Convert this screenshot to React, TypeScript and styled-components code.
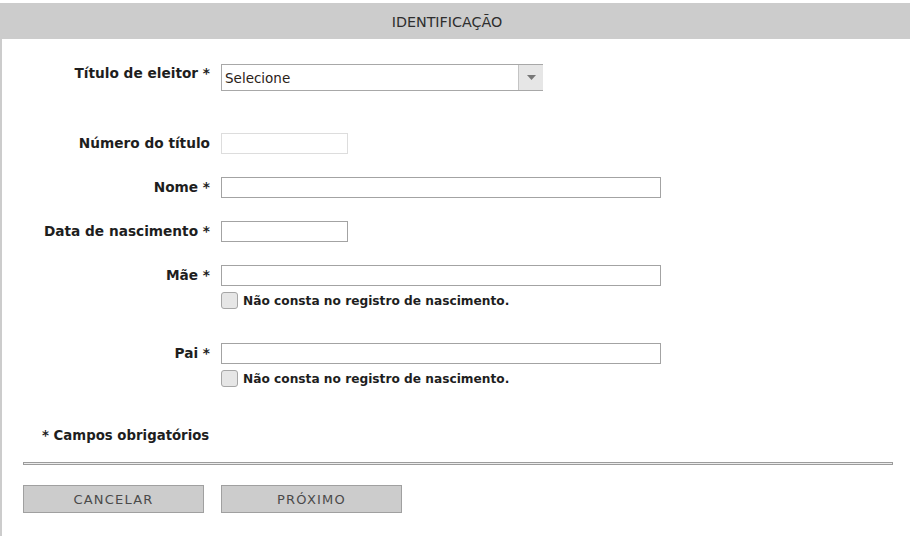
import React from "react";
import styled, { createGlobalStyle } from "styled-components";

const Global = createGlobalStyle`
  html, body { margin: 0; padding: 0; background: #fff; }
  body { font-family: Tahoma, "DejaVu Sans", Verdana, sans-serif; color: #1e1e1e; }
  * { box-sizing: border-box; }
`;

const Page = styled.div`
  margin-top: 3px;
  min-height: 533px;
  border-left: 2px solid #cccccc;
  width: 910px;
`;

const Header = styled.div`
  height: 36px;
  background: #cccccc;
  display: flex;
  align-items: center;
  justify-content: center;
  font-size: 14.3px;
  color: #2e2e2e;
  padding-top: 2px;
  padding-right: 18px;
`;

const Form = styled.div`
  display: flex;
  flex-direction: column;
`;

const Row = styled.div<{ $mt: number }>`
  display: grid;
  grid-template-columns: 208px 1fr;
  column-gap: 11px;
  align-items: start;
  margin-top: ${(p) => p.$mt}px;
`;

const Label = styled.label<{ $lh?: number }>`
  text-align: right;
  font-weight: bold;
  font-size: 13.7px;
  line-height: ${(p) => p.$lh ?? 20}px;
  color: #1e1e1e;
  white-space: nowrap;
`;

const Field = styled.div`
  display: flex;
  flex-direction: column;
  align-items: flex-start;
`;

const TextInput = styled.input<{ $w: number; $disabled?: boolean }>`
  width: ${(p) => p.$w}px;
  height: 21px;
  margin: 0;
  padding: 0 4px;
  border: 1px solid ${(p) => (p.$disabled ? "#dddddd" : "#a3a3a3")};
  background: #fff;
  font-family: inherit;
  font-size: 13px;
  outline: none;
`;

const Select = styled.div`
  width: 322px;
  height: 27px;
  display: flex;
  border: 1px solid #a8a8a8;
  border-right: none;
  background: #fff;
`;

const SelectText = styled.div`
  flex: 1;
  display: flex;
  align-items: center;
  padding-left: 3px;
  font-size: 13.5px;
  color: #2a2218;
`;

const SelectArrow = styled.div`
  width: 25px;
  border-left: 1px solid #c4c4c4;
  background: #e6e6e6;
  display: flex;
  align-items: center;
  justify-content: center;
`;

const CheckRow = styled.label`
  display: flex;
  align-items: center;
  gap: 5px;
  height: 17px;
  margin-top: 6px;
  font-weight: bold;
  font-size: 12.2px;
  line-height: 17px;
  color: #1e1e1e;
`;

const CheckText = styled.span`
  position: relative;
  top: 1px;
`;

const CheckBox = styled.span`
  width: 17px;
  height: 17px;
  border: 1px solid #a6a6a6;
  border-radius: 3px;
  background: #e6e6e6;
  display: inline-block;
`;

const Note = styled.div`
  margin-top: 38px;
  padding-left: 40px;
  font-weight: bold;
  font-size: 13.3px;
  line-height: 20px;
  padding-top: 1px;
  color: #1e1e1e;
`;

const Divider = styled.div`
  margin: 16px 17px 0 21px;
  height: 3px;
  border: 1px solid #9c9c9c;
  background: #ececec;
`;

const Buttons = styled.div`
  display: flex;
  gap: 17px;
  margin: 20px 0 0 21px;
`;

const Button = styled.button`
  width: 181px;
  height: 28px;
  background: #cccccc;
  border: 1px solid #a0a0a0;
  font-family: inherit;
  font-size: 13px;
  letter-spacing: 1.2px;
  color: #4a4a4a;
  padding: 0;
  padding-top: 1px;
`;

export default function App() {
  return (
    <>
      <Global />
      <Page>
        <Header>IDENTIFICAÇÃO</Header>
        <Form>
          <Row $mt={25}>
            <Label $lh={18}>Título de eleitor *</Label>
            <Select>
              <SelectText>Selecione</SelectText>
              <SelectArrow>
                <svg width="9" height="5" viewBox="0 0 9 5">
                  <path d="M0 0 H9 L4.5 5 Z" fill="#777" />
                </svg>
              </SelectArrow>
            </Select>
          </Row>
          <Row $mt={42}>
            <Label>Número do título</Label>
            <TextInput $w={127} $disabled readOnly />
          </Row>
          <Row $mt={23}>
            <Label>Nome *</Label>
            <TextInput $w={440} />
          </Row>
          <Row $mt={23}>
            <Label>Data de nascimento *</Label>
            <TextInput $w={127} />
          </Row>
          <Row $mt={23}>
            <Label>Mãe *</Label>
            <Field>
              <TextInput $w={440} />
              <CheckRow>
                <CheckBox />
                <CheckText>Não consta no registro de nascimento.</CheckText>
              </CheckRow>
            </Field>
          </Row>
          <Row $mt={34}>
            <Label>Pai *</Label>
            <Field>
              <TextInput $w={440} />
              <CheckRow>
                <CheckBox />
                <CheckText>Não consta no registro de nascimento.</CheckText>
              </CheckRow>
            </Field>
          </Row>
          <Note>* Campos obrigatórios</Note>
          <Divider />
          <Buttons>
            <Button>CANCELAR</Button>
            <Button>PRÓXIMO</Button>
          </Buttons>
        </Form>
      </Page>
    </>
  );
}
